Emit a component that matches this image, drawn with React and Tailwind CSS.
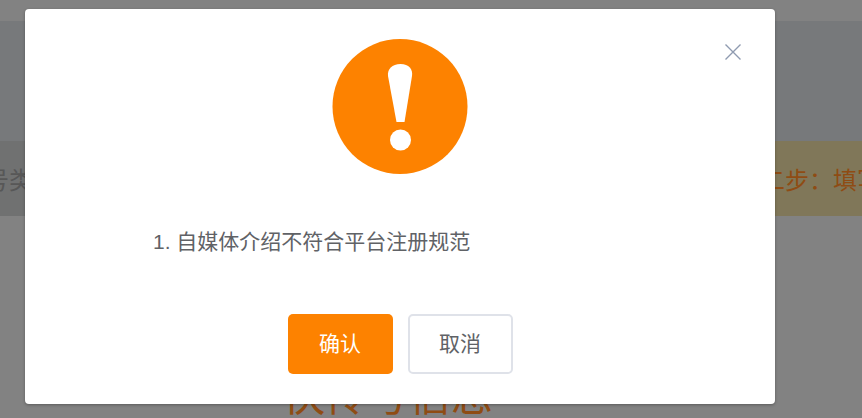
export default function App() {
  return (
    <div className="relative h-[418px] w-[862px] overflow-hidden bg-[#828282] font-['Liberation_Sans','Noto_Sans_CJK_SC',sans-serif]">
      {/* dimmed page behind the dialog */}
      <div className="flex h-full flex-col">
        <div className="h-[21px] shrink-0 bg-[#828282]" />
        <div className="h-[120px] shrink-0 bg-[#77797b]" />
        <div className="flex h-[75px] shrink-0 text-[24px] leading-[75px] whitespace-nowrap">
          <div className="h-[75px] w-[431px] shrink-0 overflow-hidden bg-[#707171] pt-[2px] text-[#575757]">
            <span className="ml-[-39px] block">账号类型</span>
          </div>
          <div className="h-[75px] w-[431px] shrink-0 overflow-hidden bg-[#807759] pl-[306px] pt-[2px] text-[#8f4c14]">
            <span>第二步：填写信息</span>
          </div>
        </div>
        <div className="pl-[283px] pt-[156px] text-[42px] leading-[50px] whitespace-nowrap text-[#8f4c14]">
          快传号信息
        </div>
      </div>

      {/* dialog */}
      <div className="absolute left-[25px] top-[9px] flex h-[395px] w-[750px] flex-col items-center rounded-[4px] bg-white pt-[30px] shadow-[0_1px_3px_rgba(0,0,0,0.3)]">
        <button className="absolute right-[33px] top-[34px] text-[#8f9bb0]" aria-label="关闭">
          <svg width="18" height="18" viewBox="0 0 18 18" fill="none" stroke="currentColor" strokeWidth="1.4" className="block">
            <path d="M1.500 1.500 16.500 16.500M16.500 1.500 1.500 16.500" />
          </svg>
        </button>

        <svg width="136" height="136" viewBox="0 0 136 136" className="block shrink-0">
          <circle cx="68" cy="67.500" r="67.500" fill="#fd8200" />
          <path
            d="M56 37c-.8-7 4-12 12.500-12S81 30 80 37l-7.500 46h-8z"
            fill="#fff"
          />
          <circle cx="68.500" cy="101" r="10.500" fill="#fff" />
        </svg>

        <p className="mt-[51px] w-full pl-[128px] text-[21px] leading-[32px] text-[#606266]">
          1. 自媒体介绍不符合平台注册规范
        </p>

        <div className="mt-[56px] flex gap-[15px] pl-[1px]">
          <button className="h-[60px] w-[105px] rounded-[5px] bg-[#fd8200] pr-[1px] text-[21px] text-white">确认</button>
          <button className="h-[60px] w-[105px] rounded-[5px] border-2 border-[#dfe2e9] bg-white pr-[1px] text-[21px] text-[#606266]">取消</button>
        </div>
      </div>
    </div>
  );
}
